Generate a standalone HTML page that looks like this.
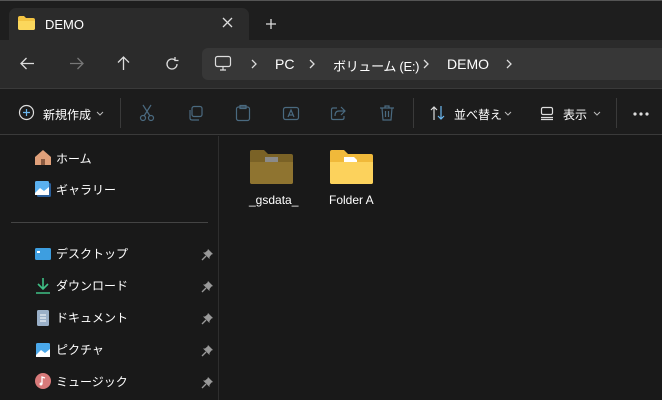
<!DOCTYPE html>
<html><head><meta charset="utf-8"><style>
*{margin:0;padding:0;box-sizing:border-box}
body{width:662px;height:400px;overflow:hidden;background:#191919;font-family:"Liberation Sans","Noto Sans CJK JP",sans-serif;color:#fff;position:relative;font-size:12px}
.abs{position:absolute}
.t{white-space:nowrap}
svg{position:absolute;overflow:visible}
</style></head><body>
<div class="abs" style="left:0;top:0;width:662px;height:40px;background:#1e1e1e;border-top:1px solid #555"></div>
<div class="abs" style="left:9px;top:8px;width:240px;height:34px;background:#2b2b2b;border-radius:7px 7px 0 0"></div>
<svg style="left:18px;top:16px" width="17" height="14"><path d="M0 2 Q0 0 2 0 H6 L8 2 H15 Q17 2 17 4 V12 Q17 14 15 14 H2 Q0 14 0 12Z" fill="#f3c443"/><path d="M0 5 H17 V12 Q17 14 15 14 H2 Q0 14 0 12Z" fill="#fbd75c"/></svg>
<div class="abs t" style="left:45px;top:17px;font-size:13px">DEMO</div>
<svg style="left:223px;top:18px" width="9" height="9" stroke="#ddd" stroke-width="1.3"><path d="M0 0L9 9M9 0L0 9"/></svg>
<svg style="left:266px;top:19px" width="10" height="10" stroke="#ddd" stroke-width="1.3"><path d="M5 0V10M0 5H10"/></svg>
<div class="abs" style="left:0;top:40px;width:662px;height:48px;background:#2b2b2b"></div>
<svg style="left:20px;top:57px" width="14" height="13" stroke="#ddd" stroke-width="1.3" fill="none"><path d="M14 6.5H1M6.5 1L1 6.5 6.5 12"/></svg>
<svg style="left:70px;top:57px" width="14" height="13" stroke="#777" stroke-width="1.3" fill="none"><path d="M0 6.5H13M7.5 1L13 6.5 7.5 12"/></svg>
<svg style="left:117px;top:56px" width="13" height="14" stroke="#ddd" stroke-width="1.3" fill="none"><path d="M6.5 14V1M1 6.5L6.5 1 12 6.5"/></svg>
<svg style="left:165px;top:57px" width="14" height="14" stroke="#ddd" stroke-width="1.3" fill="none"><path d="M12 7A5 5 0 1 1 10 3M10 0V3.5H13.5"/></svg>
<div class="abs" style="left:202px;top:48px;width:460px;height:32px;background:#373737;border-radius:6px 0 0 6px"></div>
<svg style="left:215px;top:56px" width="16" height="15" stroke="#ddd" stroke-width="1.2" fill="none"><rect x="0.5" y="0.5" width="15" height="10" rx="2"/><path d="M5 14H11M8 11V14"/></svg>
<svg style="left:252px;top:60px" width="5" height="8" stroke="#ddd" stroke-width="1.3" fill="none"><path d="M0 0L4 4 0 8"/></svg>
<div class="abs t" style="left:275px;top:56px;font-size:14px">PC</div>
<svg style="left:310px;top:60px" width="5" height="8" stroke="#ddd" stroke-width="1.3" fill="none"><path d="M0 0L4 4 0 8"/></svg>
<div class="abs t" style="left:333px;top:56px;font-size:13px;letter-spacing:-0.3px">ボリューム (E:)</div>
<svg style="left:424px;top:60px" width="5" height="8" stroke="#ddd" stroke-width="1.3" fill="none"><path d="M0 0L4 4 0 8"/></svg>
<div class="abs t" style="left:447px;top:56px;font-size:14px">DEMO</div>
<svg style="left:507px;top:60px" width="5" height="8" stroke="#ddd" stroke-width="1.3" fill="none"><path d="M0 0L4 4 0 8"/></svg>
<div class="abs" style="left:0;top:88px;width:662px;height:47px;background:#1c1c1c;border-top:1px solid #3a3a3a;border-bottom:1px solid #3a3a3a"></div>
<svg style="left:19px;top:105px" width="15" height="15" stroke="#ddd" stroke-width="1.2" fill="none"><circle cx="7.5" cy="7.5" r="7"/><path d="M7.5 4V11M4 7.5H11" stroke="#6cb8f0"/></svg>
<div class="abs t" style="left:43px;top:106px;font-size:12px">新規作成</div>
<svg style="left:97px;top:112px" width="6" height="3" stroke="#bbb" fill="none"><path d="M0 0L3 3 6 0"/></svg>
<div class="abs" style="left:120px;top:98px;width:1px;height:30px;background:#3a3a3a"></div>
<svg style="left:140px;top:105px" width="14" height="16" stroke="#4a6a80" stroke-width="1.2" fill="none"><circle cx="3" cy="13" r="2.5"/><circle cx="11" cy="13" r="2.5"/><path d="M4 11L11 0M10 11L3 0"/></svg>
<svg style="left:188px;top:106px" width="15" height="15" stroke="#4a6a80" stroke-width="1.2" fill="none"><rect x="4" y="0.5" width="10" height="10" rx="2"/><path d="M2 4V12Q2 14 4 14H11"/></svg>
<svg style="left:236px;top:105px" width="14" height="16" stroke="#4a6a80" stroke-width="1.2" fill="none"><rect x="0.5" y="2" width="13" height="13.5" rx="2"/><rect x="4" y="0.5" width="6" height="3"/></svg>
<svg style="left:283px;top:107px" width="16" height="13" stroke="#4a6a80" stroke-width="1.2" fill="none"><rect x="0.5" y="0.5" width="15" height="12" rx="2"/><path d="M5 10L8 3 11 10M6 8H10"/></svg>
<svg style="left:331px;top:106px" width="15" height="14" stroke="#4a6a80" stroke-width="1.2" fill="none"><path d="M10 1L14 5 10 9M14 5H8Q4 5 4 10M6 2H2Q0.5 2 0.5 4V12Q0.5 13.5 2 13.5H11Q13 13.5 13 12V10"/></svg>
<svg style="left:380px;top:105px" width="14" height="16" stroke="#4a6a80" stroke-width="1.2" fill="none"><path d="M0 3H14M5 3V1H9V3M2 3L3 15H11L12 3M5.5 6V12M8.5 6V12"/></svg>
<div class="abs" style="left:413px;top:98px;width:1px;height:30px;background:#3a3a3a"></div>
<svg style="left:430px;top:106px" width="16" height="14" stroke-width="1.2" fill="none"><path d="M4 14V1M1 4L4 1 7 4" stroke="#ddd"/><path d="M11 0V13M8 10L11 13 14 10" stroke="#6cb8f0"/></svg>
<div class="abs t" style="left:454px;top:106px;font-size:12px">並べ替え</div>
<svg style="left:505px;top:112px" width="6" height="3" stroke="#bbb" fill="none"><path d="M0 0L3 3 6 0"/></svg>
<svg style="left:541px;top:107px" width="12" height="13" stroke="#ddd" stroke-width="1.2" fill="none"><rect x="0.5" y="0.5" width="11" height="7" rx="1.5"/><path d="M0 10.5H12M0 12.5H12"/></svg>
<div class="abs t" style="left:563px;top:106px;font-size:12px">表示</div>
<svg style="left:594px;top:112px" width="6" height="3" stroke="#bbb" fill="none"><path d="M0 0L3 3 6 0"/></svg>
<div class="abs" style="left:616px;top:98px;width:1px;height:30px;background:#3a3a3a"></div>
<svg style="left:633px;top:112px" width="16" height="4" fill="#ddd"><circle cx="2" cy="2" r="1.6"/><circle cx="8" cy="2" r="1.6"/><circle cx="14" cy="2" r="1.6"/></svg>
<div class="abs" style="left:218px;top:136px;width:1px;height:264px;background:#2e2e2e"></div>
<div class="abs" style="left:11px;top:222px;width:197px;height:1px;background:#444"></div>
<svg style="left:35px;top:150px" width="16" height="15"><path d="M8 0L16 7V15H0V7Z" fill="#e0a07a"/><rect x="6" y="9" width="4" height="6" fill="#8a5a40"/></svg>
<div class="abs t" style="left:56px;top:150px;font-size:12px">ホーム</div>
<svg style="left:35px;top:181px" width="16" height="16"><rect x="2" y="2" width="14" height="14" rx="1.5" fill="#2a5f9a"/><rect x="0" y="0" width="14" height="14" rx="1.5" fill="#5ab0ef"/><path d="M0 12L5 7 9 10 14 6V14H0Z" fill="#fff"/></svg>
<div class="abs t" style="left:56px;top:181px;font-size:12px">ギャラリー</div>
<svg style="left:35px;top:248px" width="16" height="12"><rect width="16" height="12" rx="1.5" fill="#3d9ee0"/><rect x="2" y="3" width="3" height="2" fill="#fff"/></svg>
<div class="abs t" style="left:56px;top:245px;font-size:12px">デスクトップ</div>
<svg style="left:36px;top:278px" width="14" height="16" stroke="#3fbf85" stroke-width="1.6" fill="none"><path d="M7 0V11M2 6L7 11 12 6M0 15H14"/></svg>
<div class="abs t" style="left:56px;top:277px;font-size:12px">ダウンロード</div>
<svg style="left:37px;top:310px" width="12" height="16"><rect width="12" height="16" rx="1.5" fill="#9ab0c8"/><path d="M3 5H9M3 8H9M3 11H9" stroke="#fff"/></svg>
<div class="abs t" style="left:56px;top:309px;font-size:12px">ドキュメント</div>
<svg style="left:36px;top:343px" width="14" height="14"><rect width="14" height="14" rx="1.5" fill="#4aa8ea"/><path d="M0 12L5 7 9 10 14 6V14H0Z" fill="#fff"/></svg>
<div class="abs t" style="left:56px;top:341px;font-size:12px">ピクチャ</div>
<svg style="left:35px;top:373px" width="16" height="16"><circle cx="8" cy="8" r="8" fill="#d87a7a"/><path d="M7 11V4L10 5" stroke="#fff" stroke-width="1.3" fill="none"/><circle cx="6" cy="11" r="1.5" fill="#fff"/></svg>
<div class="abs t" style="left:56px;top:373px;font-size:12px">ミュージック</div>
<svg style="left:202px;top:249px" width="11" height="11" fill="#999"><path d="M6 0L11 5 9.5 5.5 7.5 8 7.5 10 1 3.5 3 3.5 5.5 1.5Z"/><path d="M4 7L0 11" stroke="#999" stroke-width="1.3"/></svg>
<svg style="left:202px;top:281px" width="11" height="11" fill="#999"><path d="M6 0L11 5 9.5 5.5 7.5 8 7.5 10 1 3.5 3 3.5 5.5 1.5Z"/><path d="M4 7L0 11" stroke="#999" stroke-width="1.3"/></svg>
<svg style="left:202px;top:313px" width="11" height="11" fill="#999"><path d="M6 0L11 5 9.5 5.5 7.5 8 7.5 10 1 3.5 3 3.5 5.5 1.5Z"/><path d="M4 7L0 11" stroke="#999" stroke-width="1.3"/></svg>
<svg style="left:202px;top:345px" width="11" height="11" fill="#999"><path d="M6 0L11 5 9.5 5.5 7.5 8 7.5 10 1 3.5 3 3.5 5.5 1.5Z"/><path d="M4 7L0 11" stroke="#999" stroke-width="1.3"/></svg>
<svg style="left:202px;top:377px" width="11" height="11" fill="#999"><path d="M6 0L11 5 9.5 5.5 7.5 8 7.5 10 1 3.5 3 3.5 5.5 1.5Z"/><path d="M4 7L0 11" stroke="#999" stroke-width="1.3"/></svg>
<svg style="left:250px;top:150px" width="43" height="34"><path d="M0 2Q0 0 2 0H14L18 4H41Q43 4 43 6V32Q43 34 41 34H2Q0 34 0 32Z" fill="#7a6226"/><rect x="15" y="7" width="13" height="10" fill="#8a8a8a"/><path d="M0 12H43V32Q43 34 41 34H2Q0 34 0 32Z" fill="#8f7430"/></svg>
<div class="abs t" style="left:249px;top:193px;font-size:12px">_gsdata_</div>
<svg style="left:330px;top:150px" width="43" height="34"><path d="M0 2Q0 0 2 0H14L18 4H41Q43 4 43 6V32Q43 34 41 34H2Q0 34 0 32Z" fill="#f0b93a"/><path d="M14 7H24L27 10V18H14Z" fill="#fff"/><path d="M0 12H43V32Q43 34 41 34H2Q0 34 0 32Z" fill="#fcd25c"/></svg>
<div class="abs t" style="left:329px;top:193px;font-size:12px">Folder A</div>
</body></html>
